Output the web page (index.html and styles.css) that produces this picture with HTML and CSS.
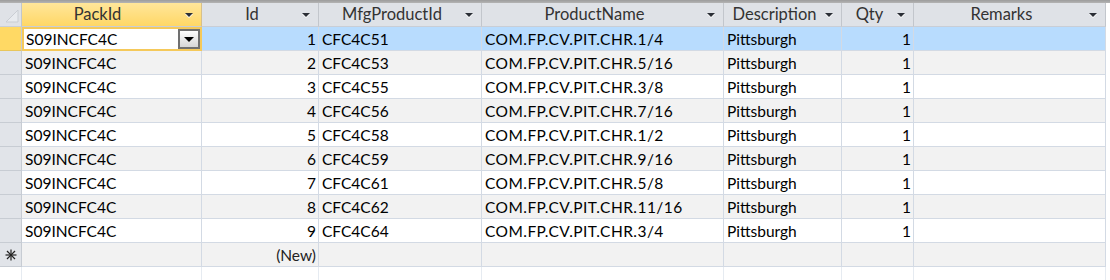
FILE: index.html
```html
<!DOCTYPE html>
<html>
<head>
<meta charset="utf-8">
<link rel="stylesheet" href="styles.css">
</head>
<body>
<div class="sheet">
  <div class="topbar"></div>
  <div class="row head">
    <div class="cell corner"><svg width="14" height="14" viewBox="0 0 14 14"><path d="M1 13 L13 1 L13 13 Z" fill="#e8ebef" stroke="#c9cdd3" stroke-width="1"/></svg></div>
    <div class="cell hc sel">PackId<span class="arr"></span></div>
    <div class="cell hc">Id<span class="arr"></span></div>
    <div class="cell hc">MfgProductId<span class="arr"></span></div>
    <div class="cell hc">ProductName<span class="arr"></span></div>
    <div class="cell hc">Description<span class="arr"></span></div>
    <div class="cell hc">Qty<span class="arr"></span></div>
    <div class="cell hc">Remarks<span class="arr"></span></div>
  </div>

  <div class="row current">
    <div class="cell rs cur"></div>
    <div class="cell active">S09INCFC4C<span class="dd"><span class="tri"></span></span></div>
    <div class="cell num">1</div>
    <div class="cell">CFC4C51</div>
    <div class="cell wide">COM.FP.CV.PIT.CHR.1/4</div>
    <div class="cell">Pittsburgh</div>
    <div class="cell num">1</div>
    <div class="cell"></div>
  </div>
  <div class="row alt">
    <div class="cell rs"></div><div class="cell">S09INCFC4C</div><div class="cell num">2</div><div class="cell">CFC4C53</div><div class="cell wide">COM.FP.CV.PIT.CHR.5/16</div><div class="cell">Pittsburgh</div><div class="cell num">1</div><div class="cell"></div>
  </div>
  <div class="row">
    <div class="cell rs"></div><div class="cell">S09INCFC4C</div><div class="cell num">3</div><div class="cell">CFC4C55</div><div class="cell wide">COM.FP.CV.PIT.CHR.3/8</div><div class="cell">Pittsburgh</div><div class="cell num">1</div><div class="cell"></div>
  </div>
  <div class="row alt">
    <div class="cell rs"></div><div class="cell">S09INCFC4C</div><div class="cell num">4</div><div class="cell">CFC4C56</div><div class="cell wide">COM.FP.CV.PIT.CHR.7/16</div><div class="cell">Pittsburgh</div><div class="cell num">1</div><div class="cell"></div>
  </div>
  <div class="row">
    <div class="cell rs"></div><div class="cell">S09INCFC4C</div><div class="cell num">5</div><div class="cell">CFC4C58</div><div class="cell wide">COM.FP.CV.PIT.CHR.1/2</div><div class="cell">Pittsburgh</div><div class="cell num">1</div><div class="cell"></div>
  </div>
  <div class="row alt">
    <div class="cell rs"></div><div class="cell">S09INCFC4C</div><div class="cell num">6</div><div class="cell">CFC4C59</div><div class="cell wide">COM.FP.CV.PIT.CHR.9/16</div><div class="cell">Pittsburgh</div><div class="cell num">1</div><div class="cell"></div>
  </div>
  <div class="row">
    <div class="cell rs"></div><div class="cell">S09INCFC4C</div><div class="cell num">7</div><div class="cell">CFC4C61</div><div class="cell wide">COM.FP.CV.PIT.CHR.5/8</div><div class="cell">Pittsburgh</div><div class="cell num">1</div><div class="cell"></div>
  </div>
  <div class="row alt">
    <div class="cell rs"></div><div class="cell">S09INCFC4C</div><div class="cell num">8</div><div class="cell">CFC4C62</div><div class="cell wide">COM.FP.CV.PIT.CHR.11/16</div><div class="cell">Pittsburgh</div><div class="cell num">1</div><div class="cell"></div>
  </div>
  <div class="row">
    <div class="cell rs"></div><div class="cell">S09INCFC4C</div><div class="cell num">9</div><div class="cell">CFC4C64</div><div class="cell wide">COM.FP.CV.PIT.CHR.3/4</div><div class="cell">Pittsburgh</div><div class="cell num">1</div><div class="cell"></div>
  </div>
  <div class="row alt">
    <div class="cell rs newsel"><svg width="12" height="12" viewBox="0 0 12 12"><g stroke="#222" stroke-width="1.2"><line x1="6" y1="0.5" x2="6" y2="11.5"/><line x1="0.5" y1="6" x2="11.5" y2="6"/><line x1="2" y1="2" x2="10" y2="10"/><line x1="10" y1="2" x2="2" y2="10"/></g></svg></div>
    <div class="cell"></div><div class="cell num newtxt">(New)</div><div class="cell"></div><div class="cell"></div><div class="cell"></div><div class="cell"></div><div class="cell"></div>
  </div>
  <div class="row tail">
    <div class="cell"></div><div class="cell"></div><div class="cell"></div><div class="cell"></div><div class="cell"></div><div class="cell"></div><div class="cell"></div><div class="cell"></div>
  </div>
</div>
</body>
</html>
```
FILE: styles.css
```css
html, body {
  margin: 0;
  padding: 0;
  background: #ffffff;
}
.sheet {
  width: 1110px;
  height: 280px;
  overflow: hidden;
  font-family: "Lato", "Liberation Sans", sans-serif;
  font-size: 15.5px;
  color: #000;
}
.topbar {
  height: 3px;
  background: linear-gradient(#9c9c9c, #b4b4b4);
}
.row {
  display: grid;
  grid-template-columns: 22px 180px 117px 163px 242px 118px 72px 192px;
  height: 24px;
}
.cell {
  box-sizing: border-box;
  border-right: 1px solid #d3dae4;
  border-bottom: 1px solid #d3dae4;
  height: 24px;
  line-height: 23px;
  padding: 1px 3px 0 3px;
  white-space: nowrap;
  overflow: hidden;
  position: relative;
}
.cell.wide { letter-spacing: 0.45px; }
.row.alt .cell { background: #f2f2f2; }
.row.current .cell { background: #b8dcfe; }
.num { text-align: right; padding-right: 2px; }

.head .cell {
  background: #dfe2e7;
  border-right: 1px solid #c2c6cc;
  border-bottom: 1px solid #c9ced6;
  color: #333;
  text-align: center;
  font-size: 16.5px;
  padding: 0 16px 0 0;
}
.head .cell.sel {
  background: linear-gradient(#ffe69a, #ffd766);
  border-right-color: #d7c08a;
  padding-right: 28px;
}
.head .corner {
  padding: 0;
  display: flex;
  align-items: flex-end;
  justify-content: flex-end;
}
.head .corner svg { margin: 0 2px 3px 0; }
.arr {
  position: absolute;
  right: 8px;
  top: 10px;
  width: 0;
  height: 0;
  border-left: 4px solid transparent;
  border-right: 4px solid transparent;
  border-top: 4px solid #2b2f36;
  filter: drop-shadow(0 1px 0 #ffffff);
}

.cell.rs {
  background: #e1e4e9 !important;
  border-right: 1px solid #c7ccd3;
  border-bottom: 1px solid #c7ccd3;
  padding: 0;
}
.cell.rs.cur { background: #ffd964 !important; border-bottom-color: #e8c65c; }
.cell.rs.newsel { display: flex; align-items: center; justify-content: center; }

.row.current .cell.active {
  background: #ffffff;
  border: 2px solid #f5c95a;
  line-height: 21px;
  padding: 0 0 0 2px;
}
.dd {
  position: absolute;
  right: 0;
  top: 0;
  width: 22px;
  height: 20px;
  box-sizing: border-box;
  border: 2px solid #707070;
  background: linear-gradient(#fdfdfd, #d6d6d6);
  display: flex;
  align-items: center;
  justify-content: center;
}
.tri {
  width: 0;
  height: 0;
  border-left: 5px solid transparent;
  border-right: 5px solid transparent;
  border-top: 5px solid #000;
}
.newtxt { color: #222; }

.row.tail { height: 13px; }
.row.tail .cell {
  height: 13px;
  border-bottom: none;
  border-right: 1px solid #e6ebf1;
  background: #fff;
}
```
